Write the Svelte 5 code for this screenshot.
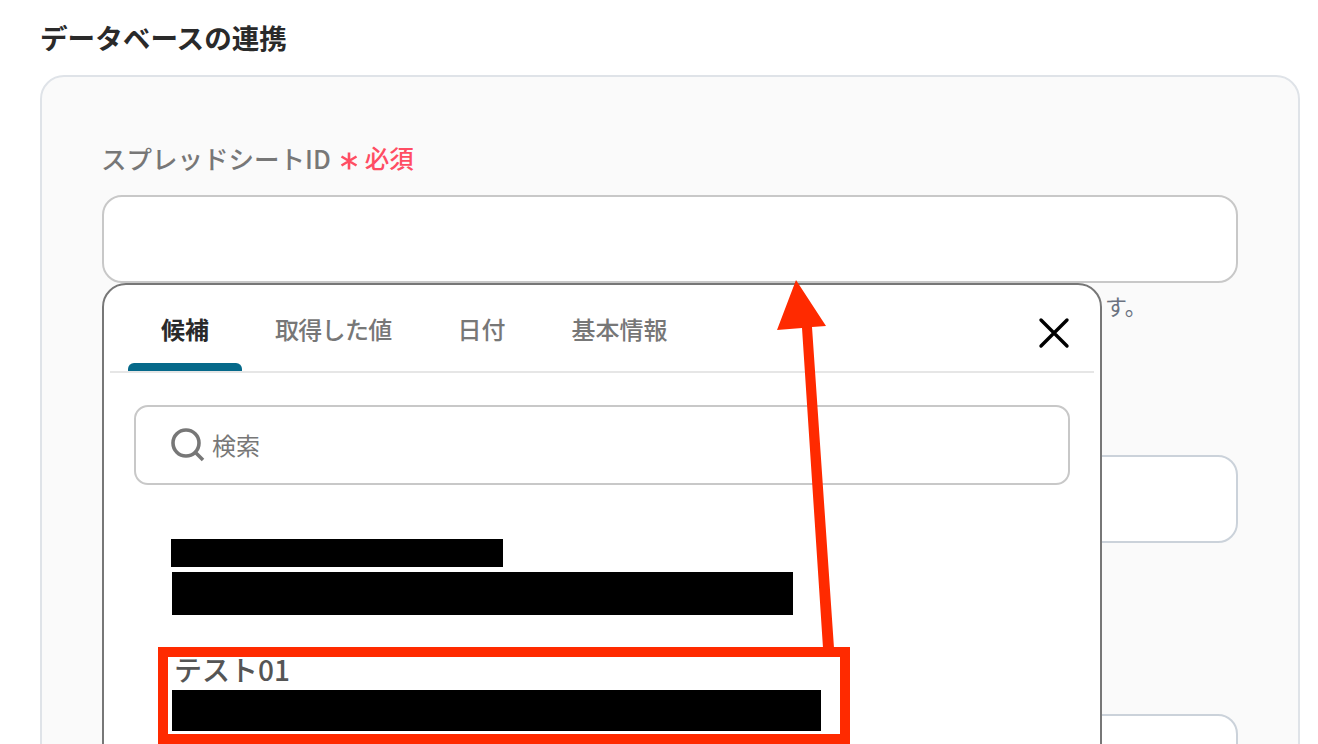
<script>
  const tabs = ['候補', '取得した値', '日付', '基本情報'];
</script>

<div class="page">
  <h2 class="title">データベースの連携</h2>

  <section class="panel">
    <div class="field first">
      <div class="label">
        スプレッドシートID
        <svg class="star" width="18" height="18" viewBox="0 0 18 18">
          <path d="M9 0.5 V17.5 M1.5 4.5 L16.5 13.5 M16.5 4.5 L1.5 13.5" stroke="#ff4d63" stroke-width="2.6" fill="none" />
        </svg>
        <span class="req">必須</span>
      </div>
      <div class="input top"></div>
      <p class="help">す。</p>
    </div>
    <div class="input second"></div>
    <div class="input third"></div>
  </section>

  <div class="popup">
    <div class="tabs">
      {#each tabs as tab, i}
        <div class="tab" class:active={i === 0} class:tight={i === 1}>{tab}</div>
      {/each}
    </div>
    <svg class="close" width="32" height="32" viewBox="0 0 32 32">
      <path d="M3 3 L29 29 M29 3 L3 29" stroke="#000" stroke-width="3.4" stroke-linecap="round" fill="none" />
    </svg>

    <div class="body">
      <div class="search">
        <svg width="34" height="34" viewBox="0 0 34 34">
          <circle cx="15" cy="15" r="13" stroke="#777" stroke-width="3.6" fill="none" />
          <path d="M24.5 24.5 L32 32" stroke="#777" stroke-width="3.6" fill="none" />
        </svg>
        <span class="placeholder">検索</span>
      </div>

      <div class="option one">
        <div class="mask name"></div>
        <div class="mask id"></div>
      </div>
      <div class="option two">
        <div class="opt-title">テスト01</div>
        <div class="mask id wide"></div>
      </div>
    </div>
  </div>

  <div class="highlight"></div>
  <svg class="arrow" width="1318" height="744" viewBox="0 0 1318 744">
    <polygon points="796,280 826,326 812,327 834,648 823,648 802,328 777,330" fill="#ff2a00" />
  </svg>
</div>

<style>
  :global(body) {
    background: #fff;
  }
  .page {
    position: relative;
    height: 744px;
    overflow: hidden;
    padding: 21px 18px 0 40px;
    box-sizing: border-box;
    font-family: "Noto Sans CJK JP", sans-serif;
  }
  .title {
    margin: 0;
    font-size: 27.6px;
    line-height: 32px;
    font-weight: 600;
    color: #2a2a2a;
  }
  .panel {
    margin-top: 22px;
    height: 800px;
    box-sizing: border-box;
    padding: 62px 60px 0;
    background: #fafafa;
    border: 2px solid #dfe3e8;
    border-radius: 24px;
  }
  .label {
    display: flex;
    align-items: center;
    height: 36px;
    margin-left: -1px;
    font-size: 25.5px;
    font-weight: 500;
    color: #777;
    white-space: nowrap;
  }
  .star {
    margin: 7px 0 0 9px;
  }
  .req {
    margin-left: 7px;
    font-size: 24.5px;
    color: #ff4d63;
  }
  .input {
    height: 88px;
    box-sizing: border-box;
    background: #fff;
    border: 2px solid #c8c8c8;
    border-radius: 20px;
  }
  .top {
    margin-top: 20px;
  }
  .help {
    margin: 7px 0 0;
    padding-left: 1003px;
    font-size: 22px;
    line-height: 30px;
    color: #6b7280;
  }
  .second {
    margin-top: 135px;
    border-color: #cbd2da;
  }
  .third {
    margin-top: 171px;
    border-color: #cbd2da;
  }
  .popup {
    position: absolute;
    left: 102px;
    top: 283px;
    width: 1000px;
    height: 560px;
    box-sizing: border-box;
    padding: 0 6px;
    background: #fff;
    border: 2px solid #777;
    border-radius: 24px;
  }
  .tabs {
    display: flex;
    padding: 0 18px;
    height: 86px;
    border-bottom: 2px solid #e6e6e6;
  }
  .tab {
    position: relative;
    padding: 24px 33px 0;
    font-size: 24px;
    line-height: 40px;
    color: #777;
    font-weight: 500;
    white-space: nowrap;
  }
  .tab.tight {
    letter-spacing: -0.7px;
  }
  .tab.active {
    color: #2a2a2a;
    font-weight: 700;
  }
  .tab.active::after {
    content: "";
    position: absolute;
    left: 0;
    right: 0;
    bottom: 0;
    height: 8px;
    background: #05698a;
    border-radius: 6px 6px 0 0;
  }
  .close {
    position: absolute;
    left: 934px;
    top: 32px;
  }
  .body {
    padding: 32px 24px 0;
  }
  .search {
    display: flex;
    align-items: center;
    gap: 8px;
    height: 80px;
    box-sizing: border-box;
    padding-left: 35px;
    border: 2px solid #c8c8c8;
    border-radius: 14px;
    font-size: 24px;
    color: #777;
  }
  .placeholder {
    margin: -2px 0 0 -1px;
  }
  .option {
    padding-left: 37px;
  }
  .one {
    padding-top: 54px;
  }
  .two {
    padding-top: 36px;
  }
  .mask {
    background: #000;
  }
  .name {
    width: 332px;
    height: 28px;
  }
  .id {
    margin: 5px 0 0 1px;
    width: 621px;
    height: 43px;
  }
  .wide {
    margin-top: 1px;
    width: 649px;
    height: 41px;
  }
  .opt-title {
    padding-left: 3px;
    font-size: 28px;
    line-height: 36px;
    padding-bottom: 2px;
    font-weight: 500;
    color: #555;
  }
  .highlight {
    position: absolute;
    left: 158px;
    top: 647px;
    width: 692px;
    height: 97px;
    box-sizing: border-box;
    border: 10px solid #ff2a00;
  }
  .arrow {
    position: absolute;
    left: 0;
    top: 0;
    pointer-events: none;
  }
</style>
